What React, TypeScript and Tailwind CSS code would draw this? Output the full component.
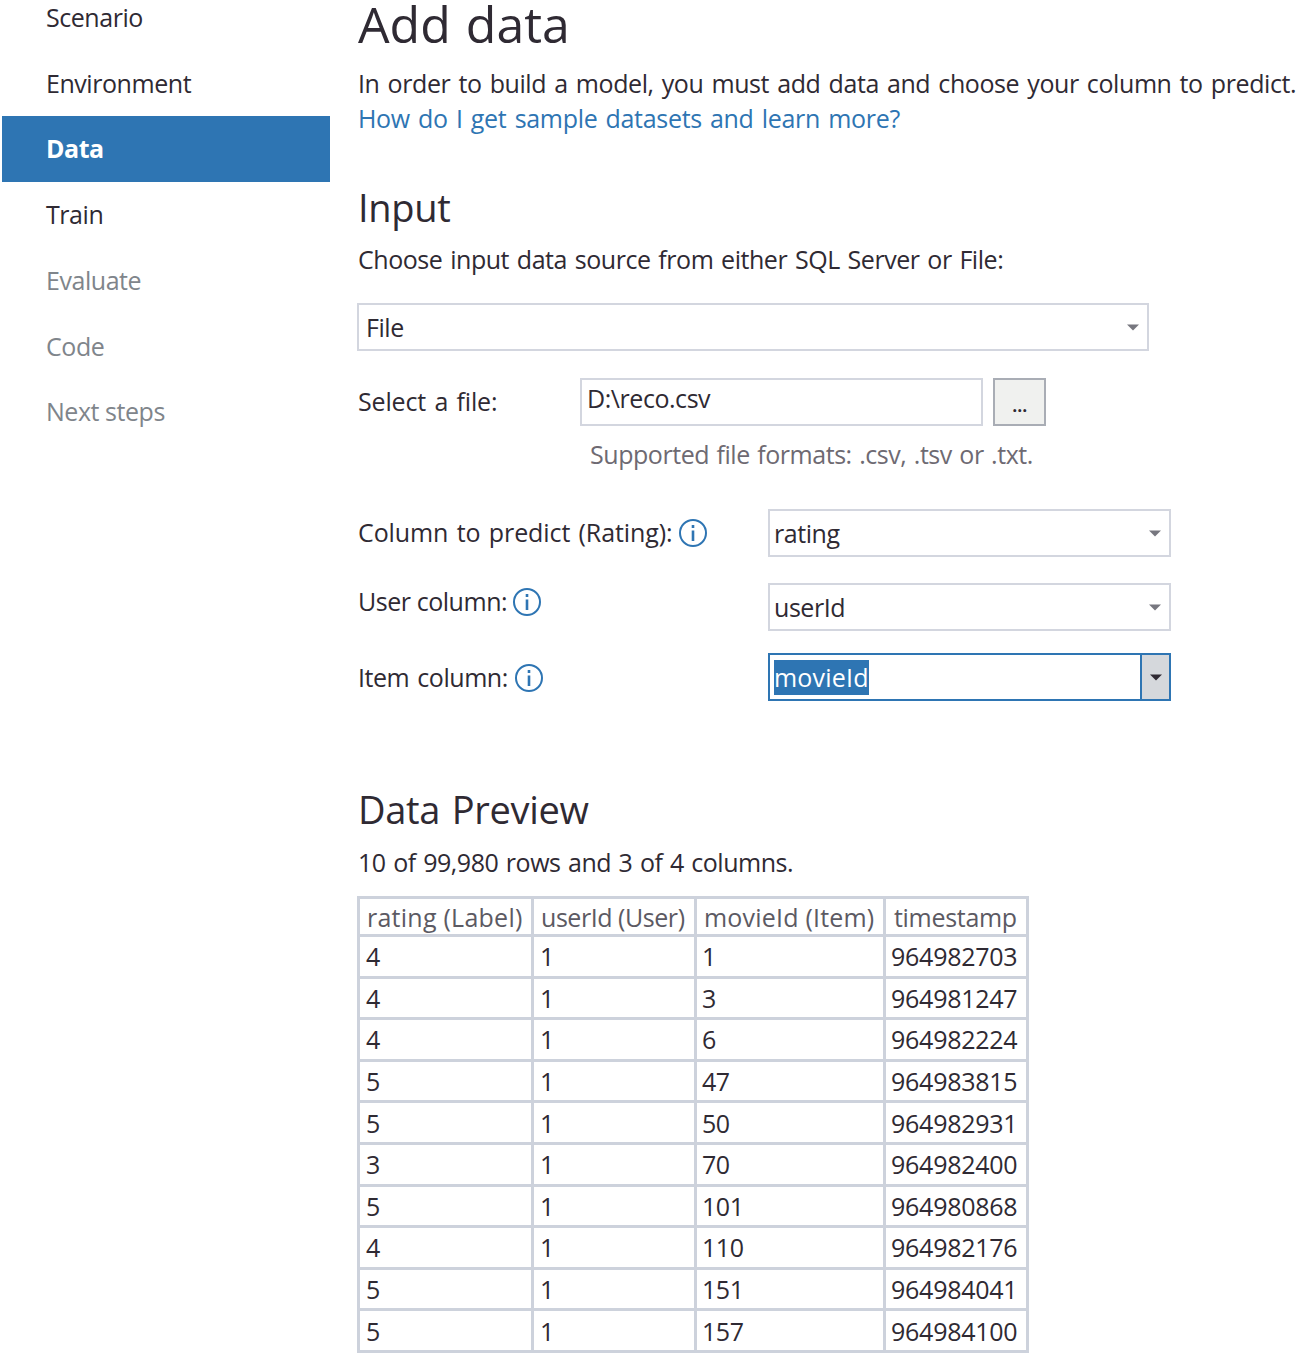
import React from "react";

const navItems = [
  { label: "Scenario", state: "done" },
  { label: "Environment", state: "done" },
  { label: "Data", state: "active" },
  { label: "Train", state: "done" },
  { label: "Evaluate", state: "off" },
  { label: "Code", state: "off" },
  { label: "Next steps", state: "off" },
];

const rows = [
  ["4", "1", "1", "964982703"],
  ["4", "1", "3", "964981247"],
  ["4", "1", "6", "964982224"],
  ["5", "1", "47", "964983815"],
  ["5", "1", "50", "964982931"],
  ["3", "1", "70", "964982400"],
  ["5", "1", "101", "964980868"],
  ["4", "1", "110", "964982176"],
  ["5", "1", "151", "964984041"],
  ["5", "1", "157", "964984100"],
];

const InfoIcon = () => (
  <svg width="30" height="30" viewBox="0 0 30 30" fill="none" className="shrink-0">
    <circle cx="15" cy="15" r="13" stroke="#2e75b3" strokeWidth="2" />
    <rect x="13.7" y="7" width="2.6" height="3" fill="#2e75b3" />
    <rect x="13.7" y="12.5" width="2.6" height="10.5" fill="#2e75b3" />
  </svg>
);

const Caret = ({ color = "#77777f" }: { color?: string }) => (
  <svg width="14" height="7" viewBox="0 0 14 7" className="shrink-0">
    <path d="M1 0.5h12L7 6.5z" fill={color} />
  </svg>
);

const ComboBox = ({ value }: { value: string }) => (
  <div className="flex h-[48px] w-[403px] items-center justify-between border-2 border-[#d3d6df] bg-white pl-[4px] pr-[7px]">
    <span className="pt-[2px]">{value}</span>
    <Caret />
  </div>
);

export default function App() {
  return (
    <div className="flex h-[1359px] w-[1300px] overflow-hidden bg-white font-['Open_Sans','Noto_Sans',sans-serif] text-[25px] tracking-[-0.45px] text-[#2f2a33]">
      {/* SIDEBAR */}
      <div className="-mt-[15px] ml-[2px] w-[328px] shrink-0">
        {navItems.map((item) => (
          <div
            key={item.label}
            className={`flex h-[65.7px] items-center pl-[44px] ${
              item.state === "active"
                ? "bg-[#2e75b3] font-bold text-white"
                : item.state === "off"
                  ? "text-[#7f858b]"
                  : ""
            }`}
          >
            {item.label}
          </div>
        ))}
      </div>

      {/* MAIN */}
      <div className="ml-[28px] flex min-w-0 flex-1 flex-col whitespace-nowrap [word-spacing:2px]">
        <h1 className="text-[50px] leading-[48px] tracking-[0px]">Add data</h1>
        <p className="mt-[18px] leading-[35px] tracking-[-0.41px]">
          In order to build a model, you must add data and choose your column to predict.
        </p>
        <a className="leading-[35px] tracking-[-0.31px] text-[#2e75b3]">How do I get sample datasets and learn more?</a>

        <h2 className="mt-[45px] text-[38px] leading-[52px] tracking-[-0.3px]">Input</h2>
        <p className="mt-[9px] leading-[35px] [word-spacing:1.7px]">Choose input data source from either SQL Server or File:</p>

        <div className="-ml-px mt-[26px] flex h-[48px] w-[792px] items-center justify-between border-2 border-[#d3d6df] pl-[7px] pr-[7px]">
          <span className="pt-[2px]">File</span>
          <Caret />
        </div>

        <div className="mt-[27px] flex h-[48px] items-center">
          <span className="w-[222px] tracking-[-0.15px]">Select a file:</span>
          <div className="flex h-[48px] w-[403px] border-2 border-[#d3d6df] pl-[5px] leading-[36px]">D:\reco.csv</div>
          <div className="ml-[10px] flex h-[48px] w-[53px] items-end justify-center border-2 border-[#a9adb5] bg-[#f0f1ef] pb-[10px] text-[20px] font-semibold leading-[18px]">
            ...
          </div>
        </div>
        <p className="ml-[232px] mt-[11px] leading-[35px] text-[#6e6a72] [word-spacing:1.4px]">Supported file formats: .csv, .tsv or .txt.</p>

        <div className="mt-[37px] flex items-center">
          <div className="flex w-[410px] items-center gap-[6px] tracking-[-0.1px]">
            <span>Column to predict (Rating):</span>
            <InfoIcon />
          </div>
          <ComboBox value="rating" />
        </div>
        <div className="mt-[26px] flex items-center">
          <div className="-mt-[10px] flex w-[410px] items-center gap-[5px] [word-spacing:0px]">
            <span>User column:</span>
            <InfoIcon />
          </div>
          <ComboBox value="userId" />
        </div>
        <div className="mt-[22px] flex items-center">
          <div className="mt-[2px] flex w-[410px] items-center gap-[6px]">
            <span>Item column:</span>
            <InfoIcon />
          </div>
          <div className="flex h-[48px] w-[403px] border-2 border-[#2e75b3] bg-white">
            <div className="flex flex-1 items-center pl-[4px]">
              <span className="bg-[#2e75b3] leading-[35px] tracking-[0.2px] text-white">movieId</span>
            </div>
            <div className="flex w-[29px] items-center justify-center border-l-2 border-[#2e75b3] bg-[#d5d8dc]">
              <Caret color="#2f2a33" />
            </div>
          </div>
        </div>

        <h2 className="mt-[82px] text-[38px] leading-[52px] tracking-[-0.3px]">Data Preview</h2>
        <p className="mt-[10px] leading-[35px] [word-spacing:1.4px]">10 of 99,980 rows and 3 of 4 columns.</p>

        {/* PREVIEW TABLE */}
        <table className="-ml-px mt-[16px] w-[669px] table-fixed border-collapse border-[3px] border-[#cdd2dc] leading-[30px] [word-spacing:0px]">
          <colgroup>
            <col className="w-[174px]" />
            <col className="w-[163px]" />
            <col className="w-[189px]" />
            <col className="w-[143px]" />
          </colgroup>
          <thead>
            <tr className="h-[38px] text-[#5c5a63]">
              <th className="border-[3px] border-[#cdd2dc] pl-[7px] pt-[1px] text-left font-normal tracking-[0.25px]">rating (Label)</th>
              <th className="border-[3px] border-[#cdd2dc] pl-[7px] pt-[1px] text-left font-normal">userId (User)</th>
              <th className="border-[3px] border-[#cdd2dc] pl-[7px] pt-[1px] text-left font-normal tracking-[0.2px]">movieId (Item)</th>
              <th className="border-[3px] border-[#cdd2dc] pl-[8px] pt-[1px] text-left font-normal tracking-[-0.3px]">timestamp</th>
            </tr>
          </thead>
          <tbody>
            {rows.map((row) => (
              <tr key={row[3]} className="h-[41.6px]">
                <td className="border-[3px] border-[#cdd2dc] pl-[6px]">{row[0]}</td>
                <td className="border-[3px] border-[#cdd2dc] pl-[6px]">{row[1]}</td>
                <td className="border-[3px] border-[#cdd2dc] pl-[5px]">{row[2]}</td>
                <td className="border-[3px] border-[#cdd2dc] pl-[5px] tracking-[-0.25px]">{row[3]}</td>
              </tr>
            ))}
          </tbody>
        </table>
      </div>
    </div>
  );
}
